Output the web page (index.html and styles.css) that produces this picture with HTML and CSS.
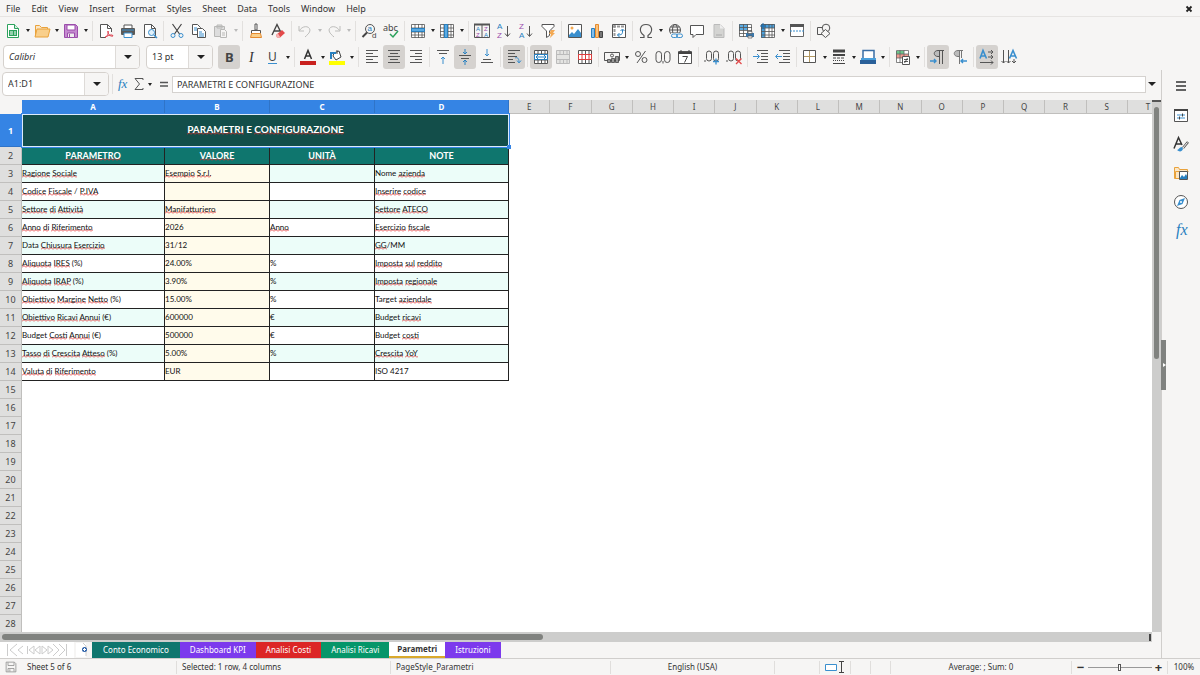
FILE: index.html
```html
<!DOCTYPE html>
<html lang="en">
<head>
<meta charset="utf-8">
<title>Parametri</title>
<link rel="stylesheet" href="styles.css">
</head>
<body>
<div class="app">
<nav class="menubar">
<button>File</button><button>Edit</button><button>View</button><button>Insert</button><button>Format</button><button>Styles</button><button>Sheet</button><button>Data</button><button>Tools</button><button>Window</button><button>Help</button>
<button class="close" aria-label="Close"><svg viewBox="0 0 8 8" width="8" height="8"><path d="M1.500 1.500l5 5M6.500 1.500l-5 5" stroke="#222" stroke-width="1.800"/></svg></button>
</nav>

<div class="toolbar">
<button class="tb" aria-label="New"><svg viewBox="0 0 16 16"><path d="M2.500 1.500h7l4 4v9h-11z" fill="#fff" stroke="#2ba25c"/><path d="M9.500 1.500v4h4" fill="#d5f0df" stroke="#2ba25c"/><path d="M4 7h8v6H4z" fill="#2ba25c"/><path d="M5 9h3M9 9h2M5 11h3M9 11h2" stroke="#fff"/></svg></button><button class="drop" aria-label="New options"></button>
<button class="tb" aria-label="Open"><svg viewBox="0 0 16 16"><path d="M1.500 13V2.500h4l2 2h6V7" fill="#fbe6c5" stroke="#e9a23b"/><path d="M1 14l2-8h13l-2 8z" fill="#f9cf8b" stroke="#e9a23b"/></svg></button><button class="drop" aria-label="Open options"></button>
<button class="tb" aria-label="Save"><svg viewBox="0 0 16 16"><path d="M1.500 1.500h11l2 2v11h-13z" fill="#c58ad0" stroke="#9b4dab"/><path d="M4 2h8v5H4z" fill="#fff" stroke="#9b4dab"/><path d="M4.500 10h7v4.500h-7z" fill="#eee" stroke="#9b4dab"/><path d="M6.500 11v3" stroke="#9b4dab"/></svg></button><button class="drop" aria-label="Save options"></button>
<i class="sep"></i>
<button class="tb" aria-label="Export as PDF"><svg viewBox="0 0 16 16"><path d="M13.500 9V5.500l-4-4h-7v13H8" fill="#fff" stroke="#555"/><path d="M9.500 1.500v4h4" fill="none" stroke="#555"/><path d="M7 14.500c3-2 4-5 3-6.500-1 2 2 6 5 5 0-2-5-1-8 1.500z" fill="none" stroke="#de3c4b"/></svg></button>
<button class="tb" aria-label="Print"><svg viewBox="0 0 16 16"><path d="M4 2h8v4H4z" fill="#fff" stroke="#555"/><rect x="1" y="5" width="14" height="7" rx="1" fill="#5a5a59"/><path d="M2 7h12" stroke="#3a8fce"/><path d="M4 10h8v4.500H4z" fill="#fff" stroke="#3a8fce"/></svg></button>
<button class="tb" aria-label="Print preview"><svg viewBox="0 0 16 16"><path d="M2.500 1.500h7l4 4v9h-11z" fill="#fff" stroke="#555"/><path d="M9.500 1.500v4h4" fill="none" stroke="#555"/><circle cx="9.500" cy="9.500" r="3" fill="#e1f1fb" stroke="#3a8fce"/><path d="M12 12l3 3" stroke="#3a8fce" stroke-width="1.500"/></svg></button>
<i class="sep"></i>
<button class="tb" aria-label="Cut"><svg viewBox="0 0 16 16" fill="none"><path d="M3.500 1l7 10M12.500 1l-7 10" stroke="#444" stroke-width="1.200"/><circle cx="4" cy="12.500" r="2" stroke="#3a8fce"/><circle cx="12" cy="12.500" r="2" stroke="#3a8fce"/></svg></button>
<button class="tb" aria-label="Copy"><svg viewBox="0 0 16 16" fill="#fff" stroke="#555"><path d="M1.500 1.500h5l3 3v7h-8z"/><path d="M6.500 5.500h5l3 3v6h-8z"/><path d="M3 5h3M3 7h3M8 9h3M8 11h5M8 13h5" stroke="#3a8fce"/></svg></button>
<button class="tb" aria-label="Paste" disabled><svg viewBox="0 0 16 16" fill="#ddd" stroke="#b8b8b6"><path d="M1.500 3.500h10v10h-10zM4 2h5v3H4z"/><path d="M7.500 6.500h4l2 2v6h-6z" fill="#f6f5f4"/><path d="M9 10h3M9 12h3"/></svg></button><button class="drop dim" aria-label="Paste options"></button>
<i class="sep"></i>
<button class="tb" aria-label="Clone formatting"><svg viewBox="0 0 16 16" fill="#fff"><path d="M7 1h2v6H7zM3.500 7.500h9v3h-9z" stroke="#555"/><path d="M3.500 10.500h9l1 4h-11z" fill="#f9cf8b" stroke="#e58a2f"/></svg></button>
<button class="tb" aria-label="Clear formatting"><svg viewBox="0 0 16 16" fill="none"><path d="M2 12L7 1.500l4 8M4 8h6" stroke="#444" stroke-width="1.400"/><path d="M6 12l6-5 3 3-5 4.500H7z" fill="#e34a4a"/><path d="M6 12l2-1.500 2.500 4H7z" fill="#f6b1b1"/></svg></button>
<i class="sep"></i>
<button class="tb" aria-label="Undo" disabled><svg viewBox="0 0 16 16" fill="none" stroke="#bdbdbb"><path d="M2 3v5h5M2.500 7.500C5 3 12 2 13 7c0 3-3 5-5 7"/></svg></button><button class="drop dim" aria-label="Undo list"></button>
<button class="tb" aria-label="Redo" disabled><svg viewBox="0 0 16 16" fill="none" stroke="#bdbdbb"><path d="M14 3v5H9M13.500 7.500C11 3 4 2 3 7c0 3 3 5 5 7"/></svg></button><button class="drop dim" aria-label="Redo list"></button>
<i class="sep"></i>
<button class="tb" aria-label="Find and replace"><svg viewBox="0 0 16 16" fill="none"><circle cx="9" cy="6" r="4.500" stroke="#555"/><path d="M6 9.500L1.500 14" stroke="#444" stroke-width="2"/><text x="6.500" y="8" class="g8 blue">a</text><text x="11" y="15" class="g8">d</text></svg></button>
<button class="tb" aria-label="Spelling"><svg viewBox="0 0 16 16" fill="none"><text x="0" y="8" class="g9">abc</text><path d="M7 11l3 3 5-6" stroke="#2ba25c" stroke-width="1.500"/></svg></button>
<i class="sep"></i>
<button class="tb" aria-label="Row"><svg viewBox="0 0 16 16" fill="none"><path d="M1.500 1.500h13v13h-13z" fill="#fff"/><path d="M1.500 1.500h13v13h-13zM1 5h14M1 9h14M1 12h14M5 1v14M8.500 1v14M12 1v14" stroke="#555" stroke-width=".8"/><path d="M1.500 5.500h13v3h-13z" fill="#5aaae2" stroke="#2880c0"/></svg></button><button class="drop" aria-label="Row options"></button>
<button class="tb" aria-label="Column"><svg viewBox="0 0 16 16" fill="none"><path d="M1.500 1.500h13v13h-13z" fill="#fff"/><path d="M1.500 1.500h13v13h-13zM1 5h14M1 8.500h14M1 12h14M5 1v14M9 1v14M12 1v14" stroke="#555" stroke-width=".8"/><path d="M5.500 1.500h3v13h-3z" fill="#5aaae2" stroke="#2880c0"/></svg></button><button class="drop" aria-label="Column options"></button>
<i class="sep"></i>
<button class="tb" aria-label="Sort"><svg viewBox="0 0 16 16" fill="none"><path d="M.5 1.500h15v13H.5zM8 1v14" stroke="#555"/><path d="M0 1.500h16" stroke="#555" stroke-width="2"/><text x="2" y="8" class="g6 blue">A</text><text x="2" y="14" class="g6 purple">Z</text><text x="10" y="8" class="g6 purple">Z</text><text x="10" y="14" class="g6 blue">A</text></svg></button>
<button class="tb" aria-label="Sort ascending"><svg viewBox="0 0 16 16" fill="none"><text x="1" y="6" class="g7 blue">A</text><text x="1" y="15" class="g7 purple">Z</text><path d="M11.500 3v10M9 10.500l2.500 3 2.500-3" stroke="#555"/></svg></button>
<button class="tb" aria-label="Sort descending"><svg viewBox="0 0 16 16" fill="none"><text x="1" y="6" class="g7 purple">Z</text><text x="1" y="15" class="g7 blue">A</text><path d="M11.500 3v10M9 10.500l2.500 3 2.500-3" stroke="#555"/></svg></button>
<button class="tb" aria-label="AutoFilter"><svg viewBox="0 0 16 16"><path d="M2 1.500h12v2L9.500 8v4.500l-3 2V8L2 3.500z" fill="#fff" stroke="#555"/><path d="M11 7h4l-2 3h2l-5 5 1-4H9z" fill="#f3a953"/></svg></button>
<i class="sep"></i>
<button class="tb" aria-label="Image"><svg viewBox="0 0 16 16"><path d="M1.500 1.500h13v13h-13z" fill="#fff" stroke="#555"/><path d="M2 12l3-3 2 2 4-5 3 4v4H2z" fill="#3a8fce"/><circle cx="5" cy="5" r="1.500" fill="#f3a953"/></svg></button>
<button class="tb" aria-label="Chart"><svg viewBox="0 0 16 16"><path d="M2.500 5.500h3v9h-3z" fill="#83beec" stroke="#2880c0"/><path d="M6.500 1.500h3v13h-3z" fill="#f9c37e" stroke="#e58a2f"/><path d="M10.500 8.500h3v6h-3z" fill="#777" stroke="#444"/></svg></button>
<button class="tb" aria-label="Pivot table"><svg viewBox="0 0 16 16" fill="none"><path d="M1.500 1.500h13v13h-13z" fill="#fff" stroke="#555"/><path d="M2 3.500h12M3.500 2v12" stroke="#999" stroke-width="2" stroke-dasharray="3 1"/><path d="M11.500 7v2c0 2-1 3-5 3M9.500 8l2-2 2 2M8.500 10l-2 2 2 2" stroke="#2880c0"/></svg></button>
<i class="sep"></i>
<button class="tb" aria-label="Special character"><svg viewBox="0 0 16 16"><path d="M2 14.500h4v-2C0 8 2 1.500 8 1.500S16 8 10 12.500v2h4" fill="none" stroke="#555" stroke-width="1.200"/></svg></button><button class="drop" aria-label="Symbols"></button>
<button class="tb" aria-label="Hyperlink"><svg viewBox="0 0 16 16" fill="none"><circle cx="8" cy="7" r="5.500" stroke="#555"/><ellipse cx="8" cy="7" rx="2.500" ry="5.500" stroke="#555"/><path d="M2.500 7h11M3.500 4h9M3.500 10h9" stroke="#555"/><rect x="4" y="10" width="12" height="6" fill="#f6f5f4"/><rect x="4.500" y="11" width="6" height="3.500" rx="1.700" stroke="#3a8fce"/><rect x="9.500" y="11" width="6" height="3.500" rx="1.700" stroke="#3a8fce"/></svg></button>
<button class="tb" aria-label="Comment"><svg viewBox="0 0 16 16"><path d="M1.500 2.500h13v9H7l-3 3v-3H1.500z" fill="#fff" stroke="#555"/></svg></button>
<button class="tb" aria-label="Headers and footers" disabled><svg viewBox="0 0 16 16"><path d="M3 1.500h6l4 4v9H3z" fill="#d4d4d2" stroke="#bbb"/><path d="M9 1.500v4h4z" fill="#eee"/><path d="M5 12h6" stroke="#aaa"/></svg></button>
<i class="sep"></i>
<button class="tb" aria-label="Print area"><svg viewBox="0 0 16 16" fill="none"><path d="M1 1h13v12H1z" fill="#fff"/><path d="M1 1h9v6H1z" fill="#5aaae2"/><path d="M1.500 1.500h12v12h-12zM1 4.500h13M1 7.500h13M1 10.500h13M5.500 1v13M9.500 1v13" stroke="#555" stroke-width=".8"/><path d="M8 10h8v4H8z" fill="#3c77a8"/><path d="M10 8.500h4v2h-4zM10 13h4v2h-4z" fill="#fff" stroke="#555" stroke-width=".7"/></svg></button>
<button class="tb" aria-label="Freeze"><svg viewBox="0 0 16 16" fill="none"><path d="M1 1h13v13H1z" fill="#fff"/><path d="M1 1h14v4H5v10H1z" fill="#4a9fdb"/><path d="M1.500 1.500h13v13h-13zM1 5h14M1 8.500h14M1 12h14M5 1v14M9 1v14M12 1v14" stroke="#555" stroke-width=".8"/><path d="M3 0v6M0 3h6" stroke="#1769aa"/></svg></button><button class="drop" aria-label="Freeze options"></button>
<button class="tb" aria-label="Split window"><svg viewBox="0 0 16 16" fill="none"><path d="M1.500 1.500h13v12h-13z" fill="#fff" stroke="#666"/><path d="M1 2.500h14" stroke="#555" stroke-width="3"/><path d="M1 8h14" stroke="#3a8fce" stroke-dasharray="2 1"/></svg></button>
<i class="sep"></i>
<button class="tb" aria-label="Draw functions"><svg viewBox="0 0 16 16" fill="#f6f5f4" stroke="#555"><path d="M1.500 4.500h7v7h-7z"/><circle cx="10" cy="5" r="3.800"/><path d="M9.500 6.500l4.500 4-4.500 4-4.500-4z"/></svg></button>
</div>

<div class="toolbar format">
<div class="combo font-name"><input aria-label="Font name" value="Calibri"><button aria-label="Choose font"></button></div>
<div class="combo font-size"><input aria-label="Font size" value="13 pt"><button aria-label="Choose size"></button></div>
<button class="tb on" aria-label="Bold"><svg viewBox="0 0 16 16"><text x="4" y="13" class="bold">B</text></svg></button>
<button class="tb" aria-label="Italic"><svg viewBox="0 0 16 16"><text x="6" y="13" class="ital">I</text></svg></button>
<button class="tb" aria-label="Underline"><svg viewBox="0 0 16 16"><text x="3" y="12" class="under">U</text><path d="M3 14.500h9" stroke="#3a8fce"/></svg></button><button class="drop" aria-label="Underline styles"></button>
<i class="sep"></i>
<button class="tb" aria-label="Font color"><svg viewBox="0 0 16 16"><path d="M4.500 10L8 1.500l3.500 8.500M5.500 7h5" fill="none" stroke="#333" stroke-width="1.500"/><path d="M0 12h16v4H0z" fill="#c9211e"/></svg></button><button class="drop" aria-label="Font colors"></button>
<button class="tb" aria-label="Background color"><svg viewBox="0 0 16 16"><path d="M5 4l5-2 2 6-5 3-3-4z" fill="#fff" stroke="#444"/><path d="M8 1v4" stroke="#444"/><path d="M2 10V4h5" fill="none" stroke="#2880c0" stroke-width="2"/><path d="M0 12h16v4H0z" fill="#ff0"/></svg></button><button class="drop" aria-label="Background colors"></button>
<i class="sep"></i>
<button class="tb" aria-label="Align left"><svg viewBox="0 0 16 16" stroke="#555"><path d="M2 1.500h12M2 4.500h7M2 7.500h12M2 10.500h7M2 13.500h12"/></svg></button>
<button class="tb on" aria-label="Align center"><svg viewBox="0 0 16 16" stroke="#555"><path d="M2 1.500h12M4 4.500h8M2 7.500h12M4 10.500h8M2 13.500h12"/></svg></button>
<button class="tb" aria-label="Align right"><svg viewBox="0 0 16 16" stroke="#555"><path d="M2 1.500h12M7 4.500h7M2 7.500h12M7 10.500h7M2 13.500h12"/></svg></button>
<i class="sep"></i>
<button class="tb" aria-label="Align top"><svg viewBox="0 0 16 16" fill="none"><path d="M2 1.500h12M4 4.500h8" stroke="#555"/><path d="M8 15V8M6 10l2-2 2 2" stroke="#3a8fce"/></svg></button>
<button class="tb on" aria-label="Center vertically"><svg viewBox="0 0 16 16" fill="none"><path d="M2 6.500h12M4 9.500h8" stroke="#555"/><path d="M8 0v5M6 3l2 2 2-2M8 16v-5M6 13l2-2 2 2" stroke="#2880c0"/></svg></button>
<button class="tb" aria-label="Align bottom"><svg viewBox="0 0 16 16" fill="none"><path d="M4 10.500h8M2 13.500h12" stroke="#555"/><path d="M8 0v7M6 5l2 2 2-2" stroke="#3a8fce"/></svg></button>
<i class="sep"></i>
<button class="tb on" aria-label="Wrap text"><svg viewBox="0 0 16 16" fill="none"><path d="M2 1.500h12M2 4.500h7M2 7.500h9M2 10.500h5M2 13.500h7" stroke="#555"/><path d="M9 9c2-1 4 0 4 4M11 11.500l2 2.500 2-2.500" stroke="#3a8fce"/></svg></button>
<i class="sep"></i>
<button class="tb on" aria-label="Merge and center"><svg viewBox="0 0 16 16" fill="none"><path d="M1.500 1.500h13v13h-13zM1 5h14M1 11h14M5 1v4M8.500 1v4M12 1v4M5 11v4M8.500 11v4M12 11v4" fill="#fff" stroke="#555"/><path d="M1.500 5.500h13v5h-13z" fill="#fff" stroke="#2880c0"/><path d="M3 8h10M5 6L3 8l2 2M11 6l2 2-2 2" stroke="#2880c0"/></svg></button>
<button class="tb" aria-label="Merge cells" disabled><svg viewBox="0 0 16 16" fill="#e4e4e2" stroke="#bbb"><path d="M1.500 1.500h13v13h-13zM1 5.500h14M1 10.500h14M5 1v4M8.500 1v4M12 1v4M5 11v4M8.500 11v4M12 11v4"/></svg></button>
<button class="tb" aria-label="Unmerge cells"><svg viewBox="0 0 16 16" fill="none"><path d="M1.500 1.500h13v13h-13zM5 1v4M8.500 1v4M12 1v4M5 11v4M8.500 11v4M12 11v4" fill="#fff" stroke="#555"/><path d="M1.500 5.500h13v5h-13zM5 5v6M8.500 5v6M12 5v6" fill="#fff" stroke="#de3c3c"/></svg></button>
<i class="sep"></i>
<button class="tb" aria-label="Currency"><svg viewBox="0 0 16 16" fill="none"><path d="M.5 3.500h15v8H.5z" stroke="#555"/><circle cx="8" cy="6.500" r="1.500" stroke="#555"/><path d="M3.500 10.500h3v3h-3zM7.500 9.500h3v4h-3zM11.500 7.500h3v6h-3z" fill="#999" stroke="#444" stroke-width=".8"/></svg></button><button class="drop" aria-label="Currency options"></button>
<button class="tb" aria-label="Percent"><svg viewBox="0 0 16 16" fill="none" stroke="#555"><circle cx="5" cy="5" r="2.500"/><circle cx="11.500" cy="11" r="2.500"/><path d="M12.500 2L4 14"/></svg></button>
<button class="tb" aria-label="Number"><svg viewBox="0 0 16 16" fill="none" stroke="#555"><rect x="1" y="2.500" width="5.500" height="11" rx="2.700"/><rect x="9.500" y="2.500" width="5.500" height="11" rx="2.700"/><path d="M8 12v2.500"/></svg></button>
<button class="tb" aria-label="Date"><svg viewBox="0 0 16 16" fill="none"><path d="M1.500 2.500h13v12h-13z" fill="#fff" stroke="#555"/><path d="M1 4h14" stroke="#444" stroke-width="2"/><path d="M4 1v3M12 1v3M5.500 7.500h5l-3 6" stroke="#444"/></svg></button>
<i class="sep"></i>
<button class="tb" aria-label="Add decimal"><svg viewBox="0 0 16 16" fill="none" stroke="#555"><path d="M1 11v2"/><rect x="2.500" y="2" width="5" height="10" rx="2.500"/><rect x="9.500" y="2" width="5" height="10" rx="2.500"/><path d="M9 12.500h6M12 9.500v6" stroke="#3a8fce" stroke-width="1.300"/></svg></button>
<button class="tb" aria-label="Delete decimal"><svg viewBox="0 0 16 16" fill="none" stroke="#555"><path d="M1 11v2"/><rect x="2.500" y="2" width="5" height="10" rx="2.500"/><rect x="9.500" y="2" width="5" height="10" rx="2.500"/><path d="M10 9.500l5.500 5.500M15.500 9.500L10 15" stroke="#e34a4a" stroke-width="1.300"/></svg></button>
<i class="sep"></i>
<button class="tb" aria-label="Increase indent"><svg viewBox="0 0 16 16" fill="none"><path d="M4 1.500h11M8 4.500h7M8 7.500h7M8 10.500h7M4 13.500h11" stroke="#555"/><path d="M0 7.500h6M4 5l2.500 2.500L4 10" stroke="#3a8fce"/></svg></button>
<button class="tb" aria-label="Decrease indent"><svg viewBox="0 0 16 16" fill="none"><path d="M4 1.500h11M8 4.500h7M8 7.500h7M8 10.500h7M4 13.500h11" stroke="#555"/><path d="M1 7.500h6M3 5L.5 7.500 3 10" stroke="#3a8fce"/></svg></button>
<i class="sep"></i>
<button class="tb" aria-label="Borders"><svg viewBox="0 0 16 16" fill="none"><path d="M1.500 1.500h12v12h-12z" fill="#fff" stroke="#555"/><path d="M7.500 2v11M2 7.500h11" stroke="#b29862"/></svg></button><button class="drop" aria-label="Border options"></button>
<button class="tb" aria-label="Border style"><svg viewBox="0 0 16 16" stroke="#444"><path d="M2 2h12" stroke-width="3"/><path d="M2 6h12" stroke-width="2"/><path d="M2 9h12" stroke-dasharray="3 1"/><path d="M2 11.500h12" stroke-dasharray="1 1"/><path d="M2 14.500h12"/></svg></button><button class="drop" aria-label="Border styles"></button>
<button class="tb" aria-label="Border color"><svg viewBox="0 0 16 16"><path d="M3 1.500h11v9H3z" fill="#fff" stroke="#3a6ea5" stroke-width="1.500"/><path d="M1 9h15v2H1z" fill="#4a9fdb"/><path d="M0 11h16v4H0z" fill="#2a6099"/></svg></button><button class="drop" aria-label="Border colors"></button>
<i class="sep"></i>
<button class="tb" aria-label="Conditional formatting"><svg viewBox="0 0 16 16" fill="none"><path d="M1 1h13v12H1z" fill="#fff"/><path d="M1 2h8v3H1z" fill="#6cc68b"/><path d="M1 5h13v4H1z" fill="#f09a8f"/><path d="M1.500 1.500h12v12h-12zM1 5h13M1 9h13M5 1v13M9 1v13" stroke="#666" stroke-width=".8"/><path d="M7.500 7.500h7v8h-7z" fill="#fff" stroke="#555"/><path d="M9 10.500h4M9 12.500h4M12.500 9l-3 5" stroke="#333" stroke-width=".8"/></svg></button><button class="drop" aria-label="Conditions"></button>
<i class="sep"></i>
<button class="tb on" aria-label="Left to right"><svg viewBox="0 0 16 16" fill="none"><path d="M9 1.500C3 1 3 8 9 7.500z" fill="#bbb"/><path d="M14 1.500H8C3 1.500 3 7.500 8 7.500h1M9.500 1.500V15M12.500 1.500V15" stroke="#555"/><path d="M0 12h6M4 10l2 2-2 2" stroke="#3a8fce" stroke-width="1.400"/></svg></button>
<button class="tb" aria-label="Right to left"><svg viewBox="0 0 16 16" fill="none"><path d="M7 1.500C1 1 1 8 7 7.500z" fill="#bbb"/><path d="M11 1.500H6C1 1.500 1 7.500 6 7.500h1M7.500 1.500V15M9.500 1.500V9" stroke="#777"/><path d="M9 12h6M11 10l-2 2 2 2" stroke="#3a8fce" stroke-width="1.400"/></svg></button>
<i class="sep"></i>
<button class="tb on" aria-label="Text horizontal"><svg viewBox="0 0 16 16" fill="none"><path d="M1 9.500L4 1.500l3.500 8M2 7h5" stroke="#3a8fce" stroke-width="1.600"/><path d="M9 3h5M12 1l2 2-2 2M9 8h5M12 6l2 2-2 2M1 13.500h13M12 11.500l2 2-2 2" stroke="#555"/></svg></button>
<button class="tb" aria-label="Text vertical"><svg viewBox="0 0 16 16" fill="none"><path d="M8.500 9.500L12 1.500l3.500 8M10 7h5" stroke="#3a8fce" stroke-width="1.600"/><path d="M2.500 1v13M.5 12l2 2 2-2M7.500 1v13M5.500 12l2 2 2-2M13 10v4M11 12l2 2 2-2" stroke="#555"/></svg></button>
</div>

<div class="body">
<main class="work">
<div class="formula">
<div class="combo name-box"><input aria-label="Name box" value="A1:D1"><button aria-label="Named ranges"></button></div>
<i class="sep"></i>
<button class="fbtn" aria-label="Function wizard"><svg viewBox="0 0 16 16"><text x="2" y="12" class="fx">fx</text></svg></button>
<button class="fbtn" aria-label="Select function"><svg viewBox="0 0 16 16"><path d="M12 4V2.500H4L8.500 8 4 13.500h8V12" fill="none" stroke="#555"/></svg></button><button class="drop" aria-label="Functions"></button>
<button class="fbtn eq" aria-label="Formula"><svg viewBox="0 0 16 16"><path d="M4 6.500h8M4 10h8" stroke="#555" stroke-width="1.500"/></svg></button>
<input class="formula-input" aria-label="Input line" value="PARAMETRI E CONFIGURAZIONE">
<button class="expand" aria-label="Expand formula bar"></button>
</div>

<div class="sheet-area">
<div class="sheet">
<table>
<colgroup><col class="c-head"><col class="c-a"><col class="c-b"><col class="c-c"><col class="c-d"><col span="16"></colgroup>
<thead><tr><th class="corner"></th><th class="sel">A</th><th class="sel">B</th><th class="sel">C</th><th class="sel">D</th><th>E</th><th>F</th><th>G</th><th>H</th><th>I</th><th>J</th><th>K</th><th>L</th><th>M</th><th>N</th><th>O</th><th>P</th><th>Q</th><th>R</th><th>S</th><th>T</th></tr></thead>
<tbody>
<tr class="title"><th class="sel">1</th><td colspan="4"><u>PARAMETRI</u> E <u>CONFIGURAZIONE</u></td></tr>
<tr class="heads"><th>2</th><td><u>PARAMETRO</u></td><td><u>VALORE</u></td><td><u>UNITÀ</u></td><td>NOTE</td></tr>
<tr class="row"><th>3</th><td><u>Ragione</u> <u>Sociale</u></td><td><u>Esempio</u> <u>S.r.l.</u></td><td></td><td>Nome <u>azienda</u></td></tr>
<tr class="row"><th>4</th><td><u>Codice</u> <u>Fiscale</u> / <u>P.IVA</u></td><td></td><td></td><td><u>Inserire</u> <u>codice</u></td></tr>
<tr class="row"><th>5</th><td><u>Settore</u> <u>di</u> <u>Attività</u></td><td><u>Manifatturiero</u></td><td></td><td><u>Settore</u> <u>ATECO</u></td></tr>
<tr class="row"><th>6</th><td><u>Anno</u> <u>di</u> <u>Riferimento</u></td><td>2026</td><td><u>Anno</u></td><td><u>Esercizio</u> <u>fiscale</u></td></tr>
<tr class="row"><th>7</th><td>Data <u>Chiusura</u> <u>Esercizio</u></td><td>31/12</td><td></td><td><u>GG</u>/MM</td></tr>
<tr class="row"><th>8</th><td><u>Aliquota</u> <u>IRES</u> (%)</td><td>24.00%</td><td>%</td><td><u>Imposta</u> <u>sul</u> <u>reddito</u></td></tr>
<tr class="row"><th>9</th><td><u>Aliquota</u> <u>IRAP</u> (%)</td><td>3.90%</td><td>%</td><td><u>Imposta</u> <u>regionale</u></td></tr>
<tr class="row"><th>10</th><td><u>Obiettivo</u> <u>Margine</u> <u>Netto</u> (%)</td><td>15.00%</td><td>%</td><td>Target <u>aziendale</u></td></tr>
<tr class="row"><th>11</th><td><u>Obiettivo</u> <u>Ricavi</u> <u>Annui</u> (€)</td><td>600000</td><td>€</td><td>Budget <u>ricavi</u></td></tr>
<tr class="row"><th>12</th><td>Budget <u>Costi</u> <u>Annui</u> (€)</td><td>500000</td><td>€</td><td>Budget <u>costi</u></td></tr>
<tr class="row"><th>13</th><td><u>Tasso</u> <u>di</u> <u>Crescita</u> <u>Atteso</u> (%)</td><td>5.00%</td><td>%</td><td><u>Crescita</u> <u>YoY</u></td></tr>
<tr class="row"><th>14</th><td><u>Valuta</u> <u>di</u> <u>Riferimento</u></td><td>EUR</td><td></td><td>ISO 4217</td></tr>
<tr><th>15</th></tr><tr><th>16</th></tr><tr><th>17</th></tr><tr><th>18</th></tr><tr><th>19</th></tr><tr><th>20</th></tr><tr><th>21</th></tr><tr><th>22</th></tr><tr><th>23</th></tr><tr><th>24</th></tr><tr><th>25</th></tr><tr><th>26</th></tr><tr><th>27</th></tr><tr><th>28</th></tr>
</tbody>
</table>
</div>
<div class="vscroll"><div class="vthumb"></div></div>
</div>
<div class="hscroll"><div class="htrack"><div class="hthumb"></div><i class="hsplit"></i></div></div>
<div class="tabs">
<div class="tab-nav" aria-hidden="true"><svg viewBox="0 0 62 14" width="62" height="14" fill="#fff" stroke="#ccc"><path d="M1.500 1v12M11 1L4 7l7 6M17 3l-5 4 5 4M21.500 3v8M28 3l-5 4 5 4zM34 3l-5 4 5 4zM36 3l5 4-5 4zM42 3l5 4-5 4zM47 1l6 6-6 6M53 1l6 6-6 6M60.500 1v12"/></svg></div>
<button class="add" aria-label="Add sheet"><svg viewBox="0 0 16 16"><path d="M1 1h10v14H1z" fill="#fff"/><path d="M8 1l3 3v10" fill="none" stroke="#ccc"/><circle cx="9.500" cy="7.500" r="2.500" fill="#2a5fa8"/><path d="M8 7.500h3M9.500 6v3" stroke="#fff"/></svg></button>
<button class="tab teal">Conto Economico</button><button class="tab violet">Dashboard KPI</button><button class="tab red">Analisi Costi</button><button class="tab green">Analisi Ricavi</button><button class="tab active">Parametri</button><button class="tab violet">Istruzioni</button>
</div>
</main>
<aside class="sidebar">
<button class="handle" aria-label="Collapse sidebar"><svg viewBox="0 0 4 6" width="4" height="6"><path d="M1 1l3 2-3 2z" fill="#fff"/></svg></button>
<button class="side" aria-label="Sidebar settings"><svg viewBox="0 0 16 16" stroke="#333" stroke-width="1.500"><path d="M3 4h10M3 8h10M3 12h10"/></svg></button>
<button class="side" aria-label="Properties"><svg viewBox="0 0 16 16" fill="none"><path d="M1.500 2.500h13v12h-13z" fill="#fff" stroke="#555"/><path d="M1 3h14" stroke="#444" stroke-width="2"/><path d="M4 8h8M4 11h8" stroke="#3a8fce"/><path d="M9.500 6.500v3M6.500 9.500v3" stroke="#444"/></svg></button>
<button class="side" aria-label="Styles"><svg viewBox="0 0 16 16" fill="none"><path d="M1 12.500L5.500 1.500 9 9M3 8h6" stroke="#333" stroke-width="1.500"/><path d="M15 6l-5 6" stroke="#555" stroke-width="2.500"/><path d="M14.500 6.500l-5 6" stroke="#fff"/><path d="M4 14c2 0 2-3 5-3l1 2c-1 3-4 3-6 1z" fill="#3a8fce"/></svg></button>
<button class="side" aria-label="Gallery"><svg viewBox="0 0 16 16"><path d="M1.500 13.500v-11h4l1 2h8v9z" fill="#fbe6c5" stroke="#e9a23b"/><path d="M2.500 13.500v-7h13" fill="none" stroke="#e9a23b"/><path d="M6.500 6.500h8v8h-8z" fill="#fff" stroke="#555"/><path d="M7 13l2-3 2 2 2-3 1 2v3H7z" fill="#2880c0"/></svg></button>
<button class="side" aria-label="Navigator"><svg viewBox="0 0 16 16"><circle cx="8" cy="8" r="6.500" fill="#fff" stroke="#555"/><path d="M12 4l-2.500 6L4 12l2.500-6z" fill="#3a8fce"/><circle cx="8" cy="8" r="1" fill="#fff"/></svg></button>
<button class="side" aria-label="Functions"><svg viewBox="0 0 16 16"><text x="3" y="12" class="fx big">fx</text></svg></button>
</aside>
</div>

<footer class="status">
<span class="s-sheet"><svg viewBox="0 0 16 16" width="12" height="12" fill="none" stroke="#888"><path d="M1.500 1.500h11l2 2v11h-13zM4 2v4h8V2M4 14v-4h8v4M6.500 11v3"/></svg>Sheet 5 of 6</span>
<span class="s-selected">Selected: 1 row, 4 columns</span>
<span class="s-style">PageStyle_Parametri</span>
<span class="s-lang">English (USA)</span>
<span class="s-small"></span>
<span class="s-mode"><svg viewBox="0 0 22 12" width="22" height="12" fill="none"><path d="M1.500 3.500h11v6h-11z" fill="#fff" stroke="#3a8fce"/><path d="M15 .5h5M15 11.500h5M17.500 1v10" stroke="#444"/></svg></span>
<span class="s-tiny"></span><span class="s-tiny"></span>
<span class="s-sum">Average: ; Sum: 0</span>
<span class="s-zoom"><button aria-label="Zoom out">−</button><input type="range" aria-label="Zoom" min="0" max="100" value="50"><button aria-label="Zoom in">+</button></span>
<span class="s-pct">100%</span>
</footer>
</div>
</body>
</html>
```
FILE: styles.css
```css
* { box-sizing: border-box; }
body { margin: 0; background: #f6f5f4; color: #333; font: 9px/12px "Noto Sans", sans-serif; }
button, input { font: inherit; color: inherit; margin: 0; padding: 0; border: 0; background: none; min-width: 0; }
button { display: flex; align-items: center; justify-content: center; }
svg { display: block; flex: none; overflow: visible; }
.app { display: flex; flex-direction: column; height: 100vh; overflow: hidden; }

.menubar { display: flex; flex: none; height: 17px; padding-left: 1px; border-bottom: 1px solid #e6e4e2; }
.menubar button { padding: 1px 6px 0 5px; }
.menubar .close { margin-left: auto; padding: 1px 7px 0; }

.toolbar { display: flex; flex: none; align-items: center; height: 27px; padding-left: 2px; }
.toolbar.format { height: 26px; padding-left: 3px; }
.tb { flex: none; width: 22px; height: 24px; border-radius: 3px; }
.tb svg, .side svg, .fbtn svg, .add svg { width: 16px; height: 16px; }
.tb.on { background: #d5d2cf; }
.drop { flex: none; width: 7px; height: 22px; }
.drop::before, .combo button::before, .expand::before { content: ""; border: 3px solid transparent; border-top: 3px solid #222; border-bottom: 0; }
.drop::before { border-left-width: 2px; border-right-width: 2px; }
.drop.dim::before { border-top-color: #bbb; }
.sep { flex: none; width: 1px; height: 20px; margin: 0 2px; background: #e2e0de; }
.drop + .sep { margin-left: 3px; }

.g6, .g7, .g8, .g9 { fill: #444; font: 9px "Noto Sans", sans-serif; }
.g6 { font: 6px/1 "Liberation Sans", sans-serif; }
.g7 { font: 8px/1 "Liberation Sans", sans-serif; }
.g8 { font: 8px/1 "Liberation Sans", sans-serif; }
.blue { fill: #2880c0; }
.purple { fill: #9b4dab; }
.bold { font: bold 13px "Noto Sans", sans-serif; fill: #444; }
.ital { font: italic 14px "Liberation Serif", serif; fill: #333; }
.under { font: 12px "Noto Sans", sans-serif; fill: #444; }
.fx { font: italic 13px "Liberation Serif", serif; fill: #2880c0; }
.fx.big { font-size: 16px; }

.combo { display: flex; flex: none; height: 24px; border: 1px solid #d5d1cd; border-radius: 4px; background: #fff; overflow: hidden; }
.combo input { flex: 1; padding-left: 5px; }
.combo button { width: 24px; border-left: 1px solid #dedbd8; background: #f6f5f4; }
.combo button::before, .expand::before { border-width: 4px 4px 0; }
.font-name { width: 137px; margin-right: 6px; }
.font-name input { font-style: italic; }
.font-size { width: 67px; margin-right: 5px; }
.name-box { width: 107px; }

.body { display: flex; flex: 1; min-height: 0; }
.work { display: flex; flex: 1; flex-direction: column; min-width: 0; border-right: 1px solid #d0cecc; }
.formula { display: flex; flex: none; align-items: center; height: 30px; padding: 0 3px 2px 2px; }
.formula .sep { margin: 0 3px; }
.fbtn { flex: none; width: 15px; height: 20px; }
.eq { margin-left: 3px; }
.formula-input { flex: 1; height: 17px; margin-left: 1px; padding-left: 4px; border: 1px solid #d5d2cf; background: #fff; }
.expand { width: 12px; height: 16px; }

.sheet-area { display: flex; flex: 1; min-height: 0; }
.sheet { flex: 1; min-width: 0; overflow: hidden; background: #fff; }
table { width: calc(100% + 17px); table-layout: fixed; border-spacing: 0; }
.c-head { width: 22px; }
.c-a { width: 143px; }
.c-b, .c-c { width: 105px; }
.c-d { width: 134px; }
th, td { height: 18px; padding: 0; white-space: nowrap; }
th { border-right: 1px solid #c0bfbd; border-bottom: 1px solid #c0bfbd; background: #dfdfde; color: #444; font-weight: normal; line-height: 11px; }
thead th { height: 14px; font-size: 8px; }
th.corner { border-color: transparent; background: #f6f5f4; }
th.sel { border-color: #2f74c8; background: #3584e4; color: #fff; font-weight: bold; }
td { color: #111; font: 8px/10px Lato, sans-serif; }
.title td { position: relative; z-index: 1; height: 33px; padding-bottom: 2px; border: 1px solid #dcebfc; background: #134e4a; color: #fff; font-size: 10px; line-height: 13px; font-weight: bold; text-align: center; outline: 1px solid #3584e4; }
.title td::after { content: ""; position: absolute; right: -3px; bottom: -3px; width: 4px; height: 4px; background: #3584e4; }
.heads td, .row td { border-right: 1px solid #222; border-bottom: 1px solid #222; }
.heads td { background: #0f766e; color: #fff; font-size: 9px; font-weight: bold; text-align: center; }
.row td { padding-bottom: 2px; }
.row:nth-child(odd) td { background: #ecfdf9; }
.row td:nth-child(3) { background: #fffbeb; }
u { text-decoration: none; background: url("data:image/svg+xml,%3Csvg xmlns='http://www.w3.org/2000/svg' width='4' height='3'%3E%3Cpath d='M0 2.500L2 .5l2 2' fill='none' stroke='%23e03030' stroke-width='.9'/%3E%3C/svg%3E") left bottom / 4px 3px repeat-x; }

.vscroll { flex: none; width: 9px; padding: 5px 2px 0; background: #cdcdcc; border-top: 2px solid #555; }
.vthumb { height: 48%; border-radius: 3px; background: #80827f; }
.hscroll { flex: none; height: 10px; padding-right: 9px; }
.htrack { display: flex; align-items: center; justify-content: space-between; height: 10px; padding-left: 2px; background: #cdcdcc; }
.hthumb { width: 47%; height: 6px; border-radius: 3px; background: #80827f; }
.hsplit { width: 2px; height: 7px; margin-right: 1px; background: #444; }
.tabs { display: flex; flex: none; height: 16px; font-size: 8px; }
.tab-nav { width: 74px; padding: 1px 0 0 6px; background: #fff; }
.add { width: 18px; background: #f6f5f4; }
.tab { padding: 0 10px; color: #fff; }
.teal { padding: 0 11px; background: #0f766e; }
.violet { background: #7c3aed; }
.red { background: #dc2626; }
.green { background: #059669; }
.tab.active { padding: 0 8px; border-bottom: 2px solid #d9a92c; background: #fff; color: #333; font-weight: bold; }

.sidebar { position: relative; display: flex; flex: none; flex-direction: column; gap: 5px; width: 38px; padding-top: 4px; }
.side { width: 38px; height: 24px; }
.handle { position: absolute; left: -1px; top: 46%; width: 5px; height: 50px; background: #80827f; }

.status { display: flex; flex: none; align-items: center; height: 17px; border-top: 1px solid #d0cecc; font-size: 8px; }
.status > span { display: flex; align-items: center; justify-content: center; height: 13px; border-right: 1px solid #e0dedc; }
.s-sheet, .s-selected, .s-style { padding-left: 5px; }
.status .s-sheet, .status .s-selected, .status .s-style { justify-content: flex-start; }
.s-sheet { width: 177px; gap: 10px; }
.s-selected { width: 214px; }
.s-style { width: 220px; }
.s-lang { flex: 1; }
.s-small { width: 45px; }
.s-mode { width: 31px; }
.s-tiny { width: 20px; }
.s-sum { width: 181px; }
.s-zoom { width: 96px; gap: 3px; }
.s-zoom button { width: 8px; font-size: 13px; font-weight: bold; }
.s-zoom input { width: 64px; height: 12px; appearance: none; background: linear-gradient(#999, #999) center / 100% 1px no-repeat; }
.s-zoom input::-webkit-slider-thumb { appearance: none; width: 3px; height: 7px; border: 1px solid #555; background: #fff; }
.status .s-pct { width: 32px; border: 0; }
```
